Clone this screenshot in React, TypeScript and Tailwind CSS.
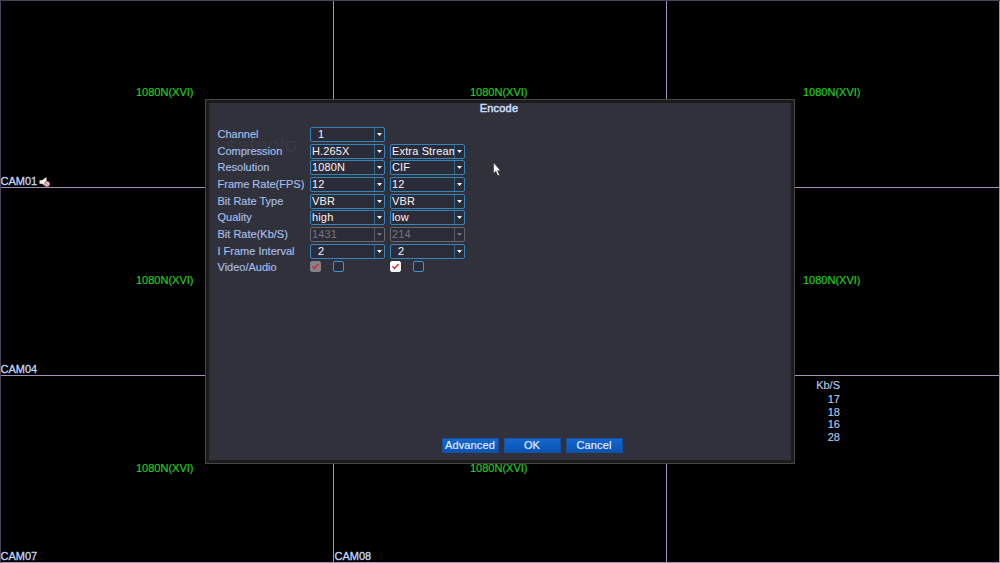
import { useState } from "react";

type Column = { value: string; disabled?: boolean; indent?: boolean };

const rows: { label: string; columns: Column[] }[] = [
  { label: "Channel", columns: [{ value: "1", indent: true }] },
  { label: "Compression", columns: [{ value: "H.265X" }, { value: "Extra Stream" }] },
  { label: "Resolution", columns: [{ value: "1080N" }, { value: "CIF" }] },
  { label: "Frame Rate(FPS)", columns: [{ value: "12" }, { value: "12" }] },
  { label: "Bit Rate Type", columns: [{ value: "VBR" }, { value: "VBR" }] },
  { label: "Quality", columns: [{ value: "high" }, { value: "low" }] },
  { label: "Bit Rate(Kb/S)", columns: [{ value: "1431", disabled: true }, { value: "214", disabled: true }] },
  { label: "I Frame Interval", columns: [{ value: "2", indent: true }, { value: "2", indent: true }] },
];

const cameras = [
  { name: "CAM01", mode: "1080N(XVI)", muted: true },
  { name: "", mode: "1080N(XVI)" },
  { name: "", mode: "1080N(XVI)" },
  { name: "CAM04", mode: "1080N(XVI)" },
  { name: "", mode: "" },
  { name: "", mode: "1080N(XVI)" },
  { name: "CAM07", mode: "1080N(XVI)" },
  { name: "CAM08", mode: "1080N(XVI)" },
  { name: "", mode: "" },
];

const rates = ["17", "18", "16", "28"];

function MutedIcon() {
  return (
    <svg width="13" height="12" viewBox="0 0 13 12">
      <path d="M0.500 4.200h2.500L7.500 1v10L3 7.800H0.500z" fill="#f4f1ee" />
      <circle cx="8.200" cy="8" r="2.500" fill="#f0d8d8" stroke="#b65c5c" strokeWidth="0.900" />
      <path d="M6.700 6.500l3 3" stroke="#b65c5c" strokeWidth="0.900" />
    </svg>
  );
}

function SelectBox({ value, disabled, indent }: Column) {
  const color = disabled ? "border-[#68686d] text-[#77777c]" : "border-[#3585bd] text-[#f4f6fa]";
  return (
    <div className={`flex h-[15px] w-[75px] rounded-[2px] border bg-[#2b2c37] leading-[13px] tracking-[0.150px] ${color}`}>
      <span className={`w-[63px] overflow-hidden whitespace-nowrap ${indent ? "pl-[7px]" : "pl-px"}`}>{value}</span>
      <span className={`flex w-[10px] shrink-0 items-center justify-center border-l ${disabled ? "border-[#5a5a60]" : "border-[#2e6790]"}`}>
        <svg width="5" height="3" viewBox="0 0 5 3">
          <path d="M0 0h5L2.500 3z" fill="currentColor" />
        </svg>
      </span>
    </div>
  );
}

function Check({ checked, disabled, onClick }: { checked: boolean; disabled?: boolean; onClick?: () => void }) {
  let color = "border-[#3b94d2] bg-[#2b2c37]";
  if (checked) color = disabled ? "border-[#858286] bg-[#858286]" : "border-[#f5f8fb] bg-white";
  return (
    <button
      type="button"
      disabled={disabled}
      onClick={onClick}
      className={`flex size-[11px] items-center justify-center rounded-[2px] border ${color}`}
    >
      {checked && (
        <svg width="7" height="7" viewBox="0 0 7 7" className="shrink-0">
          <path d="M0.500 3.300l2 2.200L6.500 1" fill="none" stroke="#d8282f" strokeWidth="1.400" />
        </svg>
      )}
    </button>
  );
}

export default function App() {
  const [checks, setChecks] = useState({ audio: false, extraVideo: true, extraAudio: false });

  const toggle = (name: "audio" | "extraVideo" | "extraAudio") => {
    setChecks((prev) => ({ ...prev, [name]: !prev[name] }));
  };

  return (
    <div className="relative h-[563px] w-[1000px] overflow-hidden bg-black font-['Liberation_Sans',Arial,sans-serif] text-[11px] leading-[13px]">
      <div className="grid h-full grid-cols-[334px_333px_333px] grid-rows-[188px_188px_187px]">
        {cameras.map((camera, i) => (
          <div key={i} className="relative border-b border-r border-[#a68fbd]">
            <div className="flex h-full flex-col justify-end">
              {camera.name && (
                <div className="-mb-px flex items-center gap-[2px] pl-[0.500px] text-[#c3d9fa] [-webkit-text-stroke:0.3px_#c3d9fa]">
                  {camera.name}
                  {camera.muted && <MutedIcon />}
                </div>
              )}
            </div>
            <span className="absolute left-[136px] top-[86px] text-[#22d422] [-webkit-text-stroke:0.15px_#22d422]">
              {camera.mode}
            </span>
          </div>
        ))}
      </div>
      <div className="pointer-events-none absolute inset-0 border-l border-t border-[#4c435c]" />

      <div className="absolute left-[800px] top-[379px] flex w-[40px] flex-col text-right text-[#b5cbee] [-webkit-text-stroke:0.15px_#b5cbee]">
        <span className="mb-px">Kb/S</span>
        {rates.map((rate) => (
          <span key={rate} className="h-[12.500px]">{rate}</span>
        ))}
      </div>

      <div className="absolute left-[205px] top-[99px] flex h-[365px] w-[590px] flex-col border border-[#464646] bg-[#1b1b1c] p-[3px]">
        <div className="relative flex flex-1 flex-col bg-[#31313b]">
          <h1 className="-mt-px mb-px pr-[2px] text-center tracking-[0.200px] text-[#c9dcfa] [-webkit-text-stroke:0.5px_#c9dcfa]">Encode</h1>
          <span className="absolute left-[17px] top-[30px] text-[21px] leading-[24px] tracking-[0.500px] text-[#393943]">safeolo</span>
          <div className="relative flex flex-1 flex-col pl-[8.500px] pt-[10.300px] text-[#a6bfeb]">
            {rows.map((row) => (
              <div key={row.label} className="flex h-[16.650px] items-center">
                <span className="w-[92.500px] whitespace-nowrap [-webkit-text-stroke:0.15px_#a6bfeb]">{row.label}</span>
                <div className="flex gap-[5px]">
                  {row.columns.map((column, i) => (
                    <SelectBox key={i} {...column} />
                  ))}
                </div>
              </div>
            ))}
            <div className="flex h-[16.650px] items-center">
              <span className="w-[92.500px] [-webkit-text-stroke:0.15px_#a6bfeb]">Video/Audio</span>
              <div className="flex gap-[12px] pb-[2px]">
                <Check checked disabled />
                <Check checked={checks.audio} onClick={() => toggle("audio")} />
              </div>
              <div className="ml-[46px] flex gap-[12px] pb-[2px]">
                <Check checked={checks.extraVideo} onClick={() => toggle("extraVideo")} />
                <Check checked={checks.extraAudio} onClick={() => toggle("extraAudio")} />
              </div>
            </div>
          </div>
          <div className="flex gap-[5px] pb-[7px] pl-[233px] text-[#e8f1fc]">
            {["Advanced", "OK", "Cancel"].map((name) => (
              <button
                key={name}
                type="button"
                className="h-[15px] w-[57px] border border-[#164f9b] bg-linear-to-b from-[#1268ce] to-[#0b53b5] pr-px leading-[13px] tracking-[0.150px] [-webkit-text-stroke:0.15px_#e8f1fc]"
              >
                {name}
              </button>
            ))}
          </div>
        </div>
      </div>

      <svg className="absolute left-[493px] top-[162px]" width="10" height="15" viewBox="0 0 10 15">
        <path d="M0.500 0.500v11l2.300-2.200 2 4.500 1.800-.9-2-4.200h3z" fill="#f7f7f7" stroke="#1c1c22" strokeWidth="0.500" />
      </svg>
    </div>
  );
}
